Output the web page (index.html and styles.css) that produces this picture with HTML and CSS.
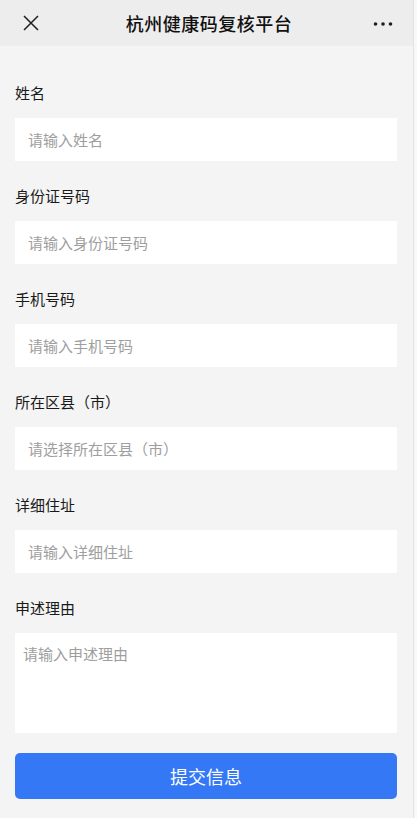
FILE: index.html
```html
<!DOCTYPE html>
<html>
<head>
  <meta http-equiv="Content-Type" content="text/html; charset=UTF-8"/>
  <title>杭州健康码复核平台</title>
  <link rel="stylesheet" href="styles.css">
</head>

<body>
  <div class="page">
    <div class="topbar">
      <span class="close">
        <svg width="16" height="16" viewBox="0 0 16 16">
          <path d="M1 1 L15 15 M15 1 L1 15" stroke="#1f1f1f" stroke-width="1.5" fill="none"/>
        </svg>
      </span>
      <span class="title">杭州健康码复核平台</span>
      <span class="more">
        <svg width="20" height="6" viewBox="0 0 20 6">
          <circle cx="2.5" cy="3" r="1.8" fill="#1f1f1f"/>
          <circle cx="10" cy="3" r="1.8" fill="#1f1f1f"/>
          <circle cx="17.5" cy="3" r="1.8" fill="#1f1f1f"/>
        </svg>
      </span>
    </div>

    <div class="form">
      <div class="item">
        <div class="label">姓名</div>
        <input class="field" type="text" placeholder="请输入姓名">
      </div>
      <div class="item">
        <div class="label">身份证号码</div>
        <input class="field" type="text" placeholder="请输入身份证号码">
      </div>
      <div class="item">
        <div class="label">手机号码</div>
        <input class="field" type="text" placeholder="请输入手机号码">
      </div>
      <div class="item">
        <div class="label">所在区县（市）</div>
        <input class="field" type="text" placeholder="请选择所在区县（市）">
      </div>
      <div class="item">
        <div class="label">详细住址</div>
        <input class="field" type="text" placeholder="请输入详细住址">
      </div>
      <div class="item last">
        <div class="label">申述理由</div>
        <textarea class="area" placeholder="请输入申述理由"></textarea>
      </div>
      <button class="submit" type="button">提交信息</button>
    </div>
  </div>
</body>
</html>
```

FILE: styles.css
```css
html, body {
  margin: 0;
  padding: 0;
  background: #f8f8f8;
}
body {
  font-family: "Noto Sans CJK SC", "Noto Sans", sans-serif;
  color: #1a1a1a;
}
.page {
  width: 413px;
  min-height: 818px;
  background: #f4f4f4;
  border-right: 1px solid #e2e2e2;
}

.topbar {
  height: 46px;
  background: #ededed;
  display: flex;
  align-items: center;
  justify-content: space-between;
  padding: 0 20px 0 23px;
}
.close {
  display: flex;
  width: 16px;
  height: 16px;
}
.title {
  font-size: 18px;
  font-weight: 500;
  letter-spacing: 0.5px;
  color: #111;
  margin-left: 6px;
}
.more {
  display: flex;
  margin-top: 1px;
}

.form {
  padding: 36px 16px 0 15px;
}
.item {
  margin-bottom: 24px;
}
.item.last {
  margin-bottom: 20px;
}
.label {
  font-size: 15px;
  line-height: 21px;
  margin-bottom: 15px;
}
.field, .area {
  display: block;
  box-sizing: border-box;
  width: 100%;
  border: 0;
  outline: none;
  background: #fff;
  font-family: inherit;
  font-size: 15px;
  color: #333;
}
.field {
  height: 43px;
  padding: 0 13px;
}
.area {
  height: 100px;
  padding: 10px 8px;
  resize: none;
  line-height: 21px;
}
.field::placeholder, .area::placeholder {
  color: #9e9e9e;
}

.submit {
  display: block;
  width: 100%;
  height: 46px;
  border: 0;
  border-radius: 5px;
  background: #3478f6;
  color: #fff;
  font-family: inherit;
  font-size: 18px;
}
```
